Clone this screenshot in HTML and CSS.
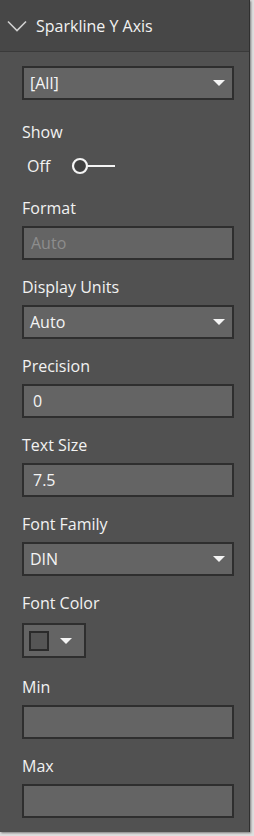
FILE: index.html
```html
<!DOCTYPE html>
<html lang="en">
<head>
  <meta charset="UTF-8" />
  <meta name="viewport" content="width=device-width, initial-scale=1.0"/>
  <title>Sparkline Y Axis</title>
  <link rel="stylesheet" href="styles.css">
</head>
<body>
  <div class="panel">
    <div class="header">
      <svg class="chevron" width="20" height="12" viewBox="0 0 20 12"><polyline points="1,1.5 10,10.5 19,1.5" fill="none" stroke="#d0d0d0" stroke-width="1.6"/></svg>
      <span class="title">Sparkline Y Axis</span>
    </div>

    <div class="content">
      <div class="select top-select"><span>[All]</span><i class="caret"></i></div>

      <div class="label">Show</div>
      <div class="toggle">
        <span>Off</span>
        <svg width="46" height="20" viewBox="0 0 46 20"><line x1="17" y1="10" x2="44" y2="10" stroke="#f4f4f4" stroke-width="2"/><circle cx="9" cy="10" r="7" fill="#3f3f3f" stroke="#f4f4f4" stroke-width="2.2"/></svg>
      </div>

      <div class="group">
        <div class="label">Format</div>
        <div class="input disabled">Auto</div>
      </div>

      <div class="group">
        <div class="label">Display Units</div>
        <div class="select"><span>Auto</span><i class="caret"></i></div>
      </div>

      <div class="group">
        <div class="label">Precision</div>
        <div class="input">0</div>
      </div>

      <div class="group">
        <div class="label">Text Size</div>
        <div class="input">7.5</div>
      </div>

      <div class="group">
        <div class="label">Font Family</div>
        <div class="select"><span>DIN</span><i class="caret"></i></div>
      </div>

      <div class="group color-group">
        <div class="label">Font Color</div>
        <div class="color-btn"><span class="swatch"></span><i class="caret"></i></div>
      </div>

      <div class="group">
        <div class="label">Min</div>
        <div class="input"></div>
      </div>

      <div class="group">
        <div class="label">Max</div>
        <div class="input"></div>
      </div>
    </div>
  </div>
</body>
</html>
```

FILE: styles.css
```css
body {
  margin: 0;
  width: 254px;
  height: 836px;
  background-color: #dedede;
  font-family: 'Open Sans', 'Noto Sans', sans-serif;
  color: #f2f2f2;
  overflow: hidden;
}

.panel {
  width: 249px;
  height: 832px;
  background-color: #515151;
  border-right: 1px solid #2f2f2f;
  box-shadow: 1px 1px 2px rgba(0, 0, 0, 0.45);
}

.header {
  height: 51px;
  background-color: #474747;
  border-bottom: 1px solid #3a3a3a;
  display: flex;
  align-items: center;
  padding-left: 7px;
  gap: 9px;
}

.chevron {
  margin-top: 1px;
}

.title {
  font-size: 16px;
  color: #f2f2f2;
}

.content {
  padding: 14px 15px 0 22px;
}

.label {
  font-size: 16px;
  line-height: 20px;
  margin-bottom: 8px;
}

.group {
  margin-bottom: 17px;
}

.color-group {
  margin-bottom: 19px;
}

.color-group .label {
  margin-bottom: 10px;
}

.select,
.input {
  box-sizing: border-box;
  height: 34px;
  width: 212px;
  background-color: #646464;
  border: 2px solid #2e2e2e;
  font-size: 16px;
  display: flex;
  align-items: center;
  justify-content: space-between;
  padding: 0 7px 0 6px;
  color: #f4f4f4;
}

.input {
  padding-left: 9px;
}

.input.disabled {
  color: #8d8d8d;
  padding-left: 7px;
}

.top-select {
  margin-bottom: 22px;
}

.caret {
  width: 0;
  height: 0;
  border-left: 6px solid transparent;
  border-right: 6px solid transparent;
  border-top: 6px solid #f4f4f4;
}

.toggle {
  display: flex;
  align-items: center;
  gap: 21px;
  height: 22px;
  margin-top: 13px;
  margin-bottom: 21px;
  padding-left: 5px;
  font-size: 16px;
}

.color-btn {
  box-sizing: border-box;
  width: 64px;
  height: 35px;
  background-color: #646464;
  border: 2px solid #2e2e2e;
  display: flex;
  align-items: center;
  gap: 11px;
  padding-left: 5px;
}

.swatch {
  box-sizing: border-box;
  width: 20px;
  height: 20px;
  background-color: #555555;
  border: 2px solid #2a2a2a;
}
```
